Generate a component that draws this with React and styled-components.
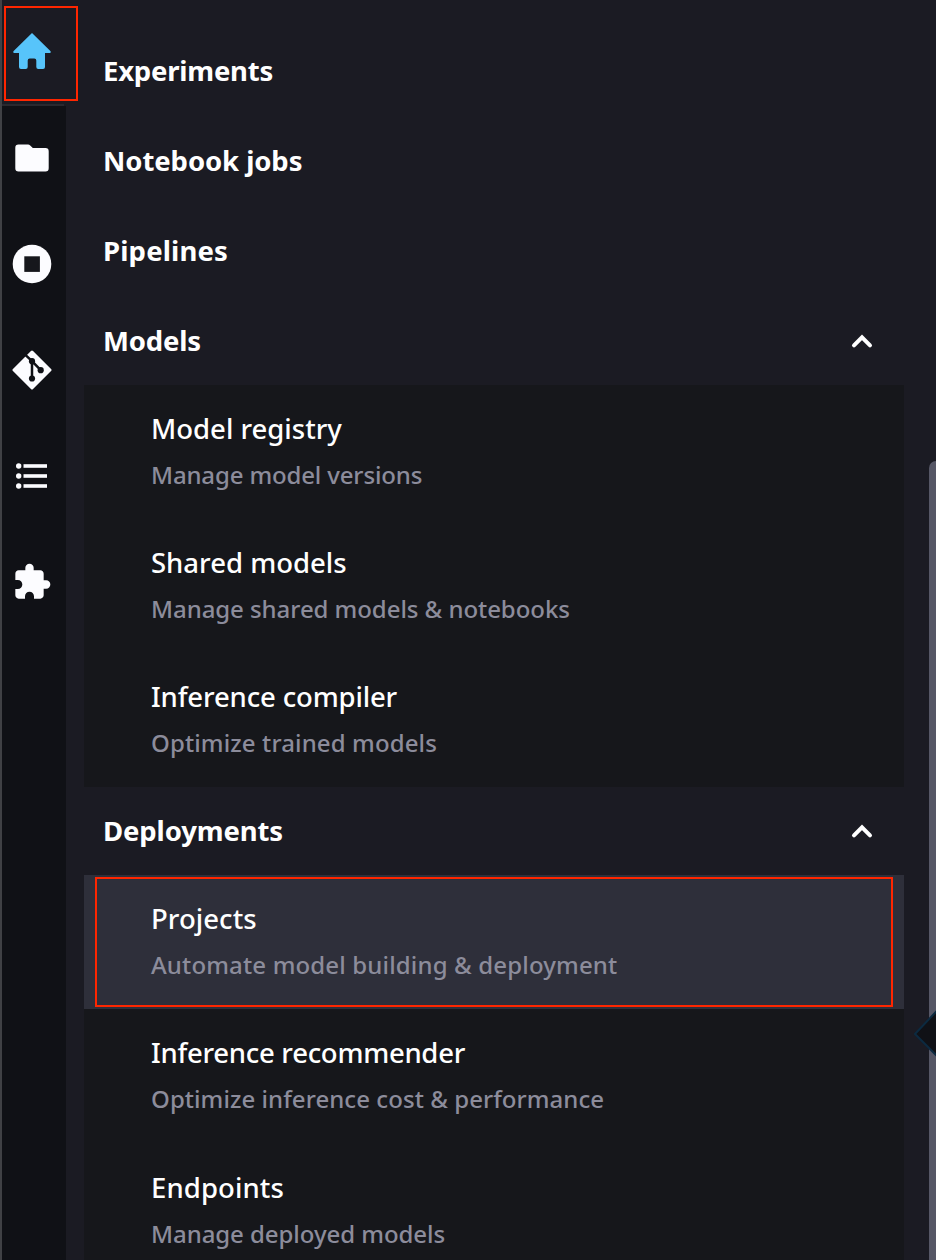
import React from "react";
import styled, { createGlobalStyle } from "styled-components";
import { MdExtension } from "react-icons/md";

const Global = createGlobalStyle`
  * { box-sizing: border-box; }
  body { margin: 0; background: #1b1b23; font-family: "Noto Sans", sans-serif; overflow: hidden; }
`;

const Page = styled.div`
  position: relative;
  display: flex;
  width: 936px;
  height: 1260px;
  overflow: hidden;
  background: #1b1b23;
  color: #fff;
`;

const Sidebar = styled.div`
  display: flex;
  flex-direction: column;
  flex: none;
  width: 66px;
  background: #101116;
  border-left: 2px solid #404145;
`;

const Tab = styled.div`
  display: flex;
  align-items: center;
  justify-content: center;
  height: 106px;
  padding: 0 4px 2px 0;
  color: #fcfcff;
  svg { display: block; flex: none; }
`;

const HomeTab = styled(Tab)`
  position: relative;
  background: #1b1b23;
  color: #57c4fa;
  padding-bottom: 4px;
  &::after {
    content: "";
    position: absolute;
    left: 0;
    right: 2px;
    bottom: 0;
    height: 2px;
    background: #29292f;
  }
`;

const Main = styled.nav`
  display: flex;
  flex-direction: column;
  width: 820px;
  margin-left: 18px;
  padding-top: 27px;
`;

const Heading = styled.div`
  display: flex;
  align-items: center;
  justify-content: space-between;
  flex: none;
  height: 88px;
  margin-bottom: ${(p) => (p.$spaced ? 2 : 0)}px;
  padding: 0 31px 0 19px;
  font-size: 27.5px;
  font-weight: 700;
  letter-spacing: ${(p) => p.$track}px;
  white-space: nowrap;
  span { padding-bottom: 2px; }
`;

const Group = styled.div`
  flex: none;
  background: #16171b;
`;

const Item = styled.div`
  position: relative;
  height: ${(p) => p.$height}px;
  padding: 24px 0 0 67px;
  background: ${(p) => (p.$active ? "#2e2f3a" : "transparent")};
  white-space: nowrap;
`;

const Title = styled.div`
  font-size: 27.5px;
  font-weight: 500;
  line-height: 40px;
  letter-spacing: ${(p) => p.$track}px;
`;

const Description = styled.div`
  margin-top: 8px;
  color: #8c8c9b;
  font-size: 24px;
  font-weight: 500;
  line-height: 36px;
  letter-spacing: ${(p) => p.$track}px;
`;

const Outline = styled.div`
  position: absolute;
  top: ${(p) => p.$top}px;
  left: ${(p) => p.$left}px;
  width: ${(p) => p.$w}px;
  height: ${(p) => p.$h}px;
  border: 2px solid #ff2600;
`;

const ScrollThumb = styled.div`
  position: absolute;
  top: 461px;
  right: -7px;
  width: 14px;
  height: 820px;
  border-radius: 7px;
  background: #565766;
`;

const Handle = styled.svg`
  position: absolute;
  top: 1008px;
  right: 0;
`;

const HomeIcon = () => (
  <svg width="40" height="38" viewBox="0 0 40 38" fill="currentColor">
    <path d="M20 1 38.6 19.3Q39.4 20.8 37.8 21H33V35Q33 37 31 37H26.3Q24.3 37 24.3 35V28.6Q24.3 26.6 22.3 26.6H17.7Q15.7 26.6 15.7 28.6V35Q15.7 37 13.7 37H9Q7 37 7 35V21H2.2Q.6 20.8 1.4 19.3Z" />
  </svg>
);

const FolderIcon = () => (
  <svg width="34" height="28" viewBox="0 0 34 28" fill="currentColor">
    <path d="M3.5.5H13Q14.3.5 15.2 1.5L17.8 4H30.5Q33.7 4 33.7 7.2V24.3Q33.7 27.5 30.5 27.5H3.5Q.3 27.5.3 24.3V3.7Q.3.5 3.5.5Z" />
  </svg>
);

const StopIcon = () => (
  <svg width="40" height="40" viewBox="0 0 40 40">
    <circle cx="20" cy="20" r="19.3" fill="currentColor" />
    <rect x="12.3" y="12.3" width="15.6" height="15.6" fill="#16171c" />
  </svg>
);

const GitIcon = () => (
  <svg width="40" height="40" viewBox="0 0 40 40">
    <path
      d="M20 2 38 20 20 38 2 20Z"
      fill="currentColor"
      stroke="currentColor"
      strokeWidth="3"
      strokeLinejoin="round"
    />
    <g stroke="#101116" strokeWidth="2.5" fill="none">
      <path d="M12.3 3.8 20 11.2 28.7 20.2M20 11V28.5" />
    </g>
    <g fill="#101116">
      <circle cx="20" cy="11.2" r="3.1" />
      <circle cx="20" cy="28.5" r="3.1" />
      <circle cx="28.7" cy="20.2" r="3.1" />
    </g>
  </svg>
);

const ListIcon = () => (
  <svg width="32" height="26" viewBox="0 0 32 26" fill="currentColor">
    {[3, 13, 23].map((y) => (
      <g key={y}>
        <circle cx="2.7" cy={y} r="2.7" />
        <rect x="7.5" y={y - 1.8} width="23.5" height="3.6" />
      </g>
    ))}
  </svg>
);

const Chevron = () => (
  <svg width="22" height="16" viewBox="0 0 22 16" fill="none" stroke="#fff" strokeWidth="4" strokeLinecap="round">
    <path d="M3 12.3 11 4.3 19 12.3" />
  </svg>
);

const links = [
  ["Experiments", -0.22],
  ["Notebook jobs", -0.08],
  ["Pipelines", 0.16],
];

const groups = [
  {
    label: "Models",
    track: -0.15,
    height: 134,
    items: [
      ["Model registry", 0, "Manage model versions", -0.15],
      ["Shared models", 0, "Manage shared models & notebooks", -0.06],
      ["Inference compiler", -0.15, "Optimize trained models", 0.12],
    ],
  },
  {
    label: "Deployments",
    track: -0.12,
    height: 134.4,
    items: [
      ["Projects", 0.05, "Automate model building & deployment", 0.15],
      ["Inference recommender", -0.28, "Optimize inference cost & performance", 0.06],
      ["Endpoints", 0.1, "Manage deployed models", -0.06],
    ],
  },
];

export default function App() {
  return (
    <Page>
      <Global />
      <Sidebar>
        <HomeTab><HomeIcon /></HomeTab>
        <Tab><FolderIcon /></Tab>
        <Tab><StopIcon /></Tab>
        <Tab><GitIcon /></Tab>
        <Tab><ListIcon /></Tab>
        <Tab><MdExtension size={40} /></Tab>
      </Sidebar>
      <Main>
        {links.map(([label, track]) => (
          <Heading key={label} $track={track} $spaced><span>{label}</span></Heading>
        ))}
        {groups.map((g) => (
          <React.Fragment key={g.label}>
            <Heading $track={g.track}><span>{g.label}</span><Chevron /></Heading>
            <Group>
              {g.items.map(([title, t1, desc, t2]) => (
                <Item key={title} $height={g.height} $active={title === "Projects"}>
                  <Title $track={t1}><span>{title}</span></Title>
                  <Description $track={t2}><span>{desc}</span></Description>
                  {title === "Projects" && <Outline $top={2} $left={11} $w={798} $h={130} />}
                </Item>
              ))}
            </Group>
          </React.Fragment>
        ))}
      </Main>
      <ScrollThumb />
      <Handle width="22" height="52" viewBox="0 0 22 52">
        <path d="M26-.5 1 26 26 51" fill="#101116" stroke="#0c2a40" strokeWidth="2" />
      </Handle>
      <Outline $top={6} $left={4} $w={74} $h={95} />
    </Page>
  );
}
